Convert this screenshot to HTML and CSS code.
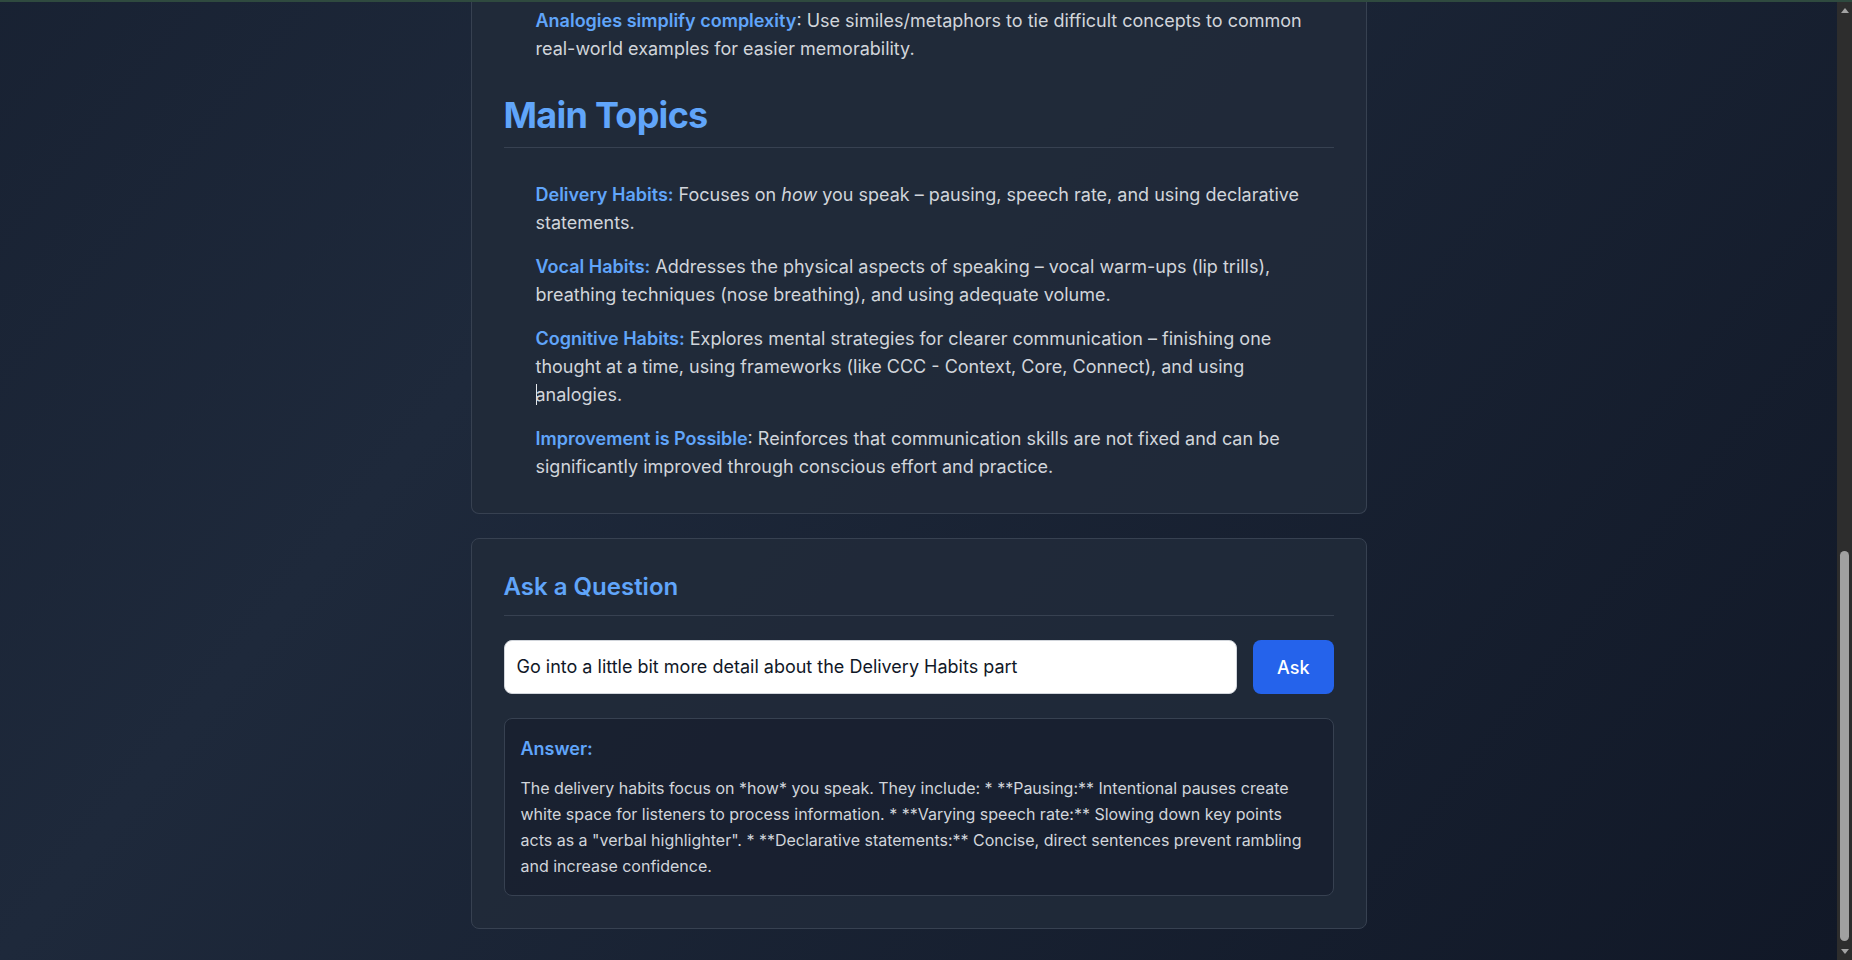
FILE: index.html
```html
<!DOCTYPE html>
<html lang="en">
<head>
<meta charset="utf-8">
<title>Video Summarizer</title>
<link rel="stylesheet" href="styles.css">
</head>
<body>
<div class="topline"></div>
<div class="frame">
  <div class="page">
    <main class="container">
      <section class="card card-continued">
        <ul class="items">
          <li><strong class="label">Analogies simplify complexity</strong>: Use similes/metaphors to tie difficult concepts to common real-world examples for easier memorability.</li>
        </ul>

        <h2 class="section-title">Main Topics</h2>
        <ul class="items">
          <li><strong class="label">Delivery Habits:</strong> Focuses on <em>how</em> you speak – pausing, speech rate, and using declarative statements.</li>
          <li><strong class="label">Vocal Habits:</strong> Addresses the physical aspects of speaking – vocal warm-ups (lip trills), breathing techniques (nose breathing), and using adequate volume.</li>
          <li><strong class="label">Cognitive Habits:</strong> Explores mental strategies for clearer communication – finishing one thought at a time, using frameworks (like CCC - Context, Core, Connect), and using <span class="nowrap"><span class="caret"></span>analogies.</span></li>
          <li><strong class="label">Improvement is Possible</strong>: Reinforces that communication skills are not fixed and can be significantly improved through conscious effort and practice.</li>
        </ul>
      </section>

      <section class="card">
        <h3 class="ask-title">Ask a Question</h3>
        <div class="ask-row">
          <input class="text-input" type="text" value="Go into a little bit more detail about the Delivery Habits part">
          <button class="btn">Ask</button>
        </div>
        <div class="answer">
          <h4 class="answer-title">Answer:</h4>
          <p class="answer-text">The delivery habits focus on *how* you speak. They include: * **Pausing:** Intentional pauses create white space for listeners to process information. * **Varying speech rate:** Slowing down key points acts as a "verbal highlighter". * **Declarative statements:** Concise, direct sentences prevent rambling and increase confidence.</p>
        </div>
      </section>
    </main>
  </div>
  <div class="scrollbar" aria-hidden="true">
    <div class="sb-btn"><span class="sb-up"></span></div>
    <div class="sb-space"></div>
    <div class="sb-thumb"></div>
    <div class="sb-btn sb-btn-down"><span class="sb-down"></span></div>
  </div>
</div>
</body>
</html>
```

FILE: styles.css
```css
html, body {
  height: 100%;
}

body {
  margin: 0;
  display: flex;
  flex-direction: column;
  overflow: hidden;
  font-family: Inter, "Noto Sans", "Liberation Sans", sans-serif;
  color: #d1d5db;
  background: #141b2b;
}

.topline {
  flex: none;
  height: 2px;
  background: #2f4a3f;
}

.frame {
  flex: 1;
  min-height: 0;
  display: flex;
}

.page {
  flex: 1;
  min-width: 0;
  overflow: hidden;
  background-image: linear-gradient(to bottom right, #111827 0%, #1e293b 50%, #111827 100%);
  background-size: 100% 2285px;
  background-position: left bottom;
  background-repeat: no-repeat;
}

.container {
  max-width: 896px;
  margin: 0 auto;
  padding: 0 0 32px;
}

.card {
  background: rgba(33, 42, 58, 0.92);
  border: 1px solid #374151;
  border-radius: 8px;
  padding: 32px;
  margin-bottom: 24px;
}

.card:last-child {
  margin-bottom: 0;
}

.card-continued {
  border-top: none;
  border-radius: 0 0 8px 8px;
  padding-top: 5px;
}

.section-title {
  margin: 32px 0 33px;
  padding-bottom: 12px;
  border-bottom: 1px solid #374151;
  font-size: 36px;
  line-height: 40px;
  font-weight: 700;
  letter-spacing: -0.75px;
  color: #60a5fa;
}

.items {
  list-style: none;
  margin: 0;
  padding: 0 0 0 32px;
  display: flex;
  flex-direction: column;
  gap: 16px;
  font-size: 18px;
  line-height: 28px;
}

.label {
  color: #60a5fa;
  font-weight: 600;
}

.nowrap {
  white-space: nowrap;
}

.caret {
  display: inline-block;
  width: 1px;
  height: 21px;
  margin-right: -1px;
  vertical-align: -4px;
  background: #e5e7eb;
}

.ask-title {
  margin: 0 0 24px;
  padding-bottom: 12px;
  border-bottom: 1px solid #374151;
  font-size: 24px;
  line-height: 32px;
  font-weight: 600;
  color: #60a5fa;
}

.ask-row {
  display: flex;
  gap: 16px;
}

.text-input {
  flex: 1;
  min-width: 0;
  padding: 12px;
  border: 1px solid #d1d5db;
  border-radius: 8px;
  background: #ffffff;
  color: #111827;
  font-family: inherit;
  font-size: 18px;
  line-height: 28px;
  outline: none;
}

.btn {
  padding: 0 24px;
  border: none;
  border-radius: 8px;
  background: #2563eb;
  color: #ffffff;
  font-family: inherit;
  font-size: 18px;
  font-weight: 500;
  cursor: pointer;
}

.answer {
  margin-top: 24px;
  padding: 16px;
  border: 1px solid #374151;
  border-radius: 8px;
  background: rgba(17, 24, 39, 0.5);
}

.answer-title {
  margin: 0 0 12px;
  font-size: 18px;
  line-height: 28px;
  font-weight: 600;
  color: #60a5fa;
}

.answer-text {
  margin: 0;
  font-size: 16px;
  line-height: 26px;
  color: #d1d5db;
}

/* drawn window scrollbar */
.scrollbar {
  flex: none;
  width: 15px;
  display: flex;
  flex-direction: column;
  align-items: center;
  background: #2d2d2d;
}

.sb-btn {
  flex: none;
  height: 17px;
  width: 15px;
  display: flex;
  align-items: center;
  justify-content: center;
}

.sb-btn-down {
  margin-top: 2px;
}

.sb-up {
  width: 0;
  height: 0;
  border-left: 4.5px solid transparent;
  border-right: 4.5px solid transparent;
  border-bottom: 5px solid #a3a3a3;
}

.sb-down {
  width: 0;
  height: 0;
  border-left: 4.5px solid transparent;
  border-right: 4.5px solid transparent;
  border-top: 5px solid #a3a3a3;
}

.sb-space {
  flex: 1;
}

.sb-thumb {
  flex: none;
  width: 9px;
  height: 390px;
  border-radius: 5px;
  background: #a0a0a0;
}
```
